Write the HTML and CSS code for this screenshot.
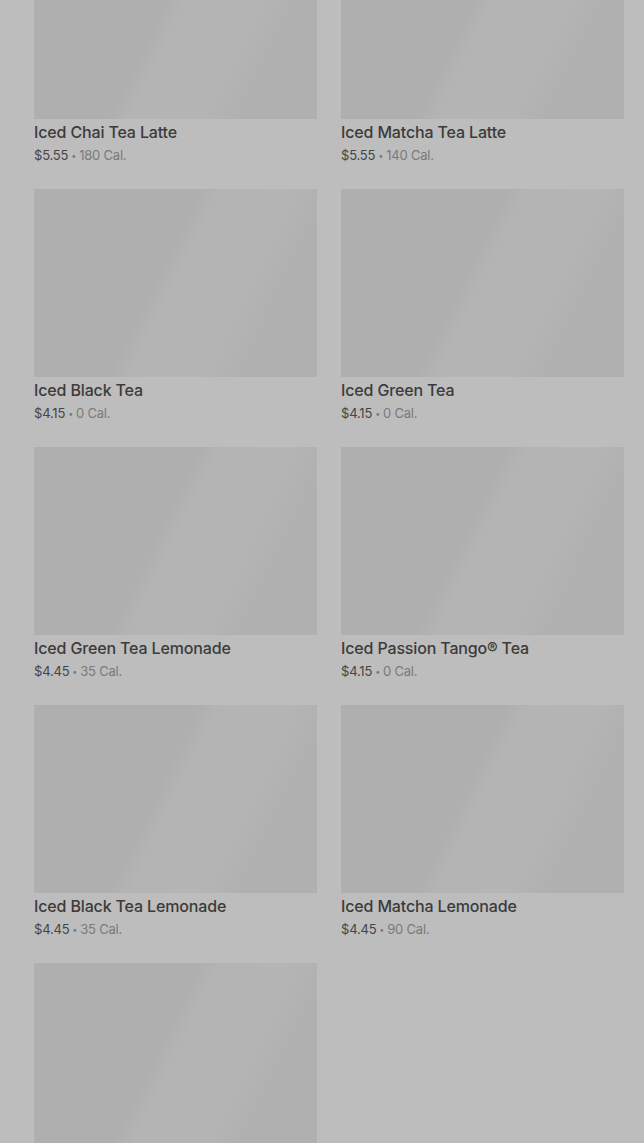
FILE: index.html
```html
<!DOCTYPE html>
<html lang="en">
<head>
<meta charset="utf-8">
<title>Iced Tea</title>
<link rel="stylesheet" href="styles.css">
</head>
<body>
<main class="page">
  <ul class="grid">
    <li class="item"><div class="thumb"></div><h3 class="name">Iced Chai Tea Latte</h3><p class="meta"><span class="price">$5.55</span><span class="dot">•</span><span class="cal">180 Cal.</span></p></li>
    <li class="item"><div class="thumb"></div><h3 class="name">Iced Matcha Tea Latte</h3><p class="meta"><span class="price">$5.55</span><span class="dot">•</span><span class="cal">140 Cal.</span></p></li>
    <li class="item"><div class="thumb"></div><h3 class="name">Iced Black Tea</h3><p class="meta"><span class="price">$4.15</span><span class="dot">•</span><span class="cal">0 Cal.</span></p></li>
    <li class="item"><div class="thumb"></div><h3 class="name">Iced Green Tea</h3><p class="meta"><span class="price">$4.15</span><span class="dot">•</span><span class="cal">0 Cal.</span></p></li>
    <li class="item"><div class="thumb"></div><h3 class="name">Iced Green Tea Lemonade</h3><p class="meta"><span class="price">$4.45</span><span class="dot">•</span><span class="cal">35 Cal.</span></p></li>
    <li class="item"><div class="thumb"></div><h3 class="name">Iced Passion Tango® Tea</h3><p class="meta"><span class="price">$4.15</span><span class="dot">•</span><span class="cal">0 Cal.</span></p></li>
    <li class="item"><div class="thumb"></div><h3 class="name">Iced Black Tea Lemonade</h3><p class="meta"><span class="price">$4.45</span><span class="dot">•</span><span class="cal">35 Cal.</span></p></li>
    <li class="item"><div class="thumb"></div><h3 class="name">Iced Matcha Lemonade</h3><p class="meta"><span class="price">$4.45</span><span class="dot">•</span><span class="cal">90 Cal.</span></p></li>
    <li class="item"><div class="thumb"></div></li>
  </ul>
</main>
</body>
</html>
```
FILE: styles.css
```css
html, body {
  margin: 0;
  padding: 0;
  background: #bdbdbd;
  overflow: hidden;
}
body {
  font-family: Inter, "Noto Sans", "Liberation Sans", sans-serif;
  color: #3a3a3a;
}
.page {
  padding: 0 20px 0 34px;
  margin-top: -69px;
}
.grid {
  list-style: none;
  margin: 0;
  padding: 0;
  display: grid;
  grid-template-columns: 283px 283px;
  column-gap: 24px;
  row-gap: 25px;
}
.item {
  display: flex;
  flex-direction: column;
}
.thumb {
  height: 188px;
  background: linear-gradient(116deg, #afafaf 0%, #afafaf 44%, #b4b4b4 50%, #b5b5b5 68%, #b0b0b0 80%, #b0b0b0 100%);
}
.name {
  margin: 3px 0 0;
  font-size: 16px;
  line-height: 20px;
  font-weight: 500;
  color: #3b3b3b;
  letter-spacing: -0.15px;
}
.meta {
  margin: 4px 0 0;
  height: 18px;
  font-size: 13px;
  line-height: 18px;
  letter-spacing: -0.2px;
}
.price {
  color: #454545;
}
.dot {
  color: #7a7a7a;
  font-size: 9px;
  line-height: 1;
  margin: 0 3px;
  vertical-align: 1px;
}
.cal {
  color: #7a7a7a;
}
```
